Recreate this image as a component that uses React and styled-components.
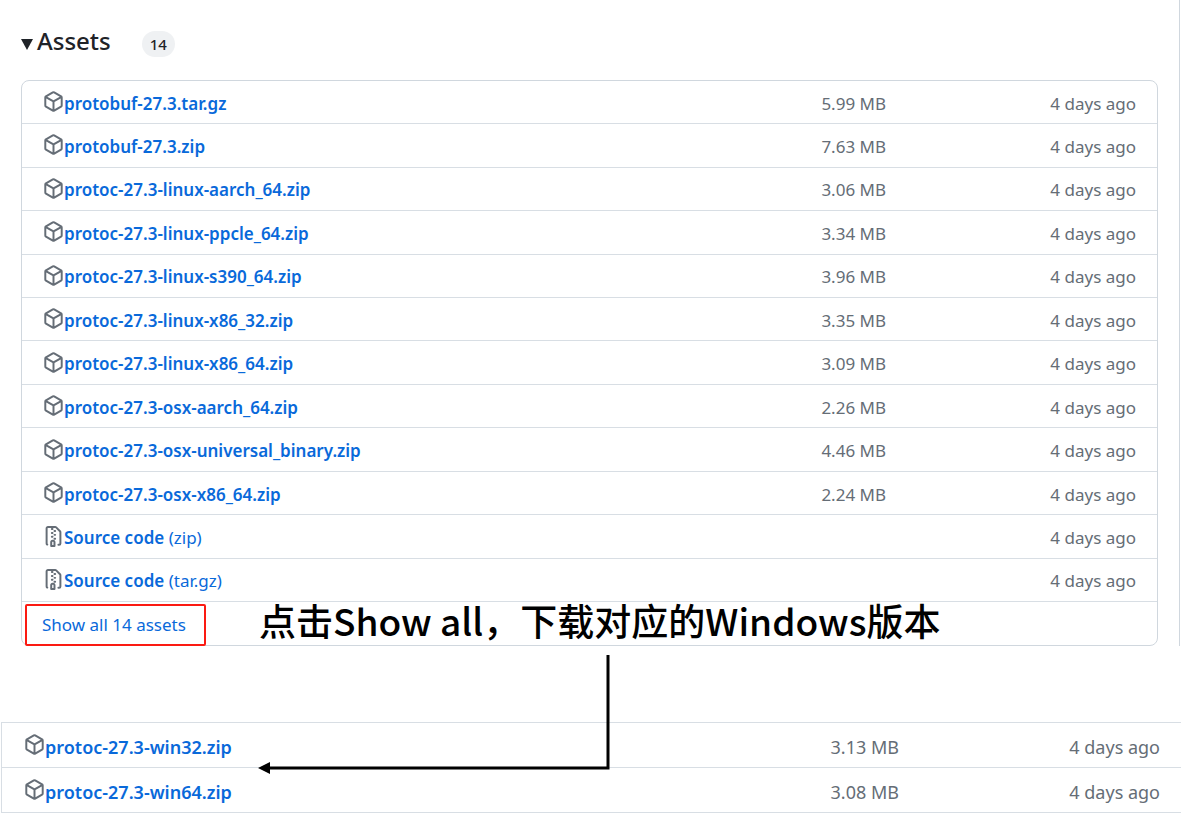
import React from 'react';
import styled, { createGlobalStyle } from 'styled-components';

const GlobalStyle = createGlobalStyle`
  *, *::before, *::after { box-sizing: border-box; }
  body {
    margin: 0;
    background: #fff;
    color: #1f2328;
    font-family: "Noto Sans", "Noto Sans CJK SC", sans-serif;
    font-size: 17px;
    line-height: 24px;
  }
`;

const Page = styled.main`
  position: relative;
  overflow: hidden;
`;

const Release = styled.section`
  margin-right: 1px;
  padding: 24px 21px 0;
  border-right: 1px solid #d0d7de;
`;

const Summary = styled.summary`
  display: flex;
  align-items: center;
  height: 36px;
  margin-bottom: 20px;
  list-style: none;
  cursor: pointer;
`;

const Caret = styled.svg`
  width: 12px;
  height: 11px;
  margin: 4px 4px 0 0;
  fill: #1f2328;
`;

const Title = styled.h3`
  margin: 0 0 2px;
  font-size: 24px;
  font-weight: 500;
  line-height: 34px;
`;

const Counter = styled.span`
  margin: 4px 0 0 31px;
  padding: 0 8px;
  border-radius: 13px;
  background: #eff1f3;
  font-size: 15px;
  font-weight: 500;
  line-height: 26px;
`;

const Box = styled.div`
  border: 1px solid #d0d7de;
  border-radius: 8px;
`;

const WindowsBox = styled.section`
  margin: 76px 0 0 1px;
  border: 1px solid #d8dee4;
  border-right: 0;
`;

const Table = styled.table`
  width: 100%;
  height: ${(p) => (p.$large ? '89px' : '520px')};
  border-collapse: collapse;
  table-layout: fixed;
  font-size: ${(p) => (p.$large ? '18px' : '17px')};
`;

const Row = styled.tr`
  & + & { border-top: 1px solid #d8dee4; }
`;

const NameCell = styled.td`
  padding: 3px 0 0 ${(p) => (p.$large ? '22px' : '21px')};
`;

const MetaCell = styled.td`
  width: ${(p) => (p.$date ? (p.$large ? '282px' : '271px') : '120px')};
  padding: 3px ${(p) => (p.$date ? '21px' : '0')} 0 0;
  color: #656d76;
  text-align: right;
`;

const AssetLink = styled.a`
  display: flex;
  align-items: center;
  color: #0969da;
  text-decoration: none;
  white-space: pre;
`;

const AssetName = styled.span`
  font-weight: 600;
`;

const Icon = styled.svg`
  flex: none;
  width: 21px;
  height: 21px;
  margin-bottom: 4px;
  fill: #656d76;
`;

const Footer = styled.div`
  display: flex;
  align-items: flex-start;
  height: 44px;
  border-top: 1px solid #d8dee4;
`;

const ShowAll = styled.button`
  width: 181px;
  height: 42px;
  margin: 2px 53px 0 3px;
  padding: 0 0 0 15px;
  border: 2px solid #fb1a12;
  border-radius: 2px;
  background: none;
  color: #0969da;
  font: inherit;
  text-align: left;
  cursor: pointer;
`;

const Note = styled.strong`
  color: #000;
  font-family: "Noto Sans CJK SC", sans-serif;
  font-size: 37px;
  font-weight: 500;
  line-height: 36px;
  white-space: nowrap;
`;

const Arrow = styled.svg`
  position: absolute;
  top: 654px;
  left: 258px;
  width: 352px;
  height: 121px;
  pointer-events: none;
`;

const icons = {
  box: 'm8.878.392 5.25 3.045c.54.314.872.89.872 1.514v6.098a1.75 1.75 0 0 1-.872 1.514l-5.25 3.045a1.75 1.75 0 0 1-1.756 0l-5.25-3.045A1.75 1.75 0 0 1 1 11.049V4.951c0-.624.332-1.201.872-1.514L7.122.392a1.75 1.75 0 0 1 1.756 0ZM7.875 1.69l-4.63 2.685L8 7.133l4.755-2.758-4.63-2.685a.248.248 0 0 0-.25 0ZM2.5 5.677v5.372c0 .09.047.171.125.216l4.625 2.683V8.432Zm6.25 8.271 4.625-2.683a.25.25 0 0 0 .125-.216V5.677L8.75 8.432Z',
  archive:
    'M3.5 1.75v11.5c0 .09.048.173.126.217a.75.75 0 0 1-.752 1.298A1.748 1.748 0 0 1 2 13.25V1.75C2 .784 2.784 0 3.75 0h5.586c.464 0 .909.185 1.237.513l2.914 2.914c.329.328.513.773.513 1.237v8.586A1.75 1.75 0 0 1 12.25 15h-.5a.75.75 0 0 1 0-1.5h.5a.25.25 0 0 0 .25-.25V4.664a.25.25 0 0 0-.073-.177L9.513 1.573a.25.25 0 0 0-.177-.073H7.25a.75.75 0 0 1 0 1.5h-.5a.75.75 0 0 1 0-1.5h-3a.25.25 0 0 0-.25.25Zm3.75 8.75h.5c.966 0 1.75.784 1.75 1.75v3a.75.75 0 0 1-.75.75h-2.5a.75.75 0 0 1-.75-.75v-3c0-.966.784-1.75 1.75-1.75ZM6 5.25a.75.75 0 0 1 .75-.75h.5a.75.75 0 0 1 0 1.5h-.5A.75.75 0 0 1 6 5.25Zm.75 2.25h.5a.75.75 0 0 1 0 1.5h-.5a.75.75 0 0 1 0-1.5ZM8 6.75A.75.75 0 0 1 8.75 6h.5a.75.75 0 0 1 0 1.5h-.5A.75.75 0 0 1 8 6.75ZM8.75 3h.5a.75.75 0 0 1 0 1.5h-.5a.75.75 0 0 1 0-1.5ZM8 9.75A.75.75 0 0 1 8.75 9h.5a.75.75 0 0 1 0 1.5h-.5A.75.75 0 0 1 8 9.75Zm-1 2.5v2.25h1v-2.25a.25.25 0 0 0-.25-.25h-.5a.25.25 0 0 0-.25.25Z',
};

const releaseAssets = [
  { name: 'protobuf-27.3.tar.gz', size: '5.99 MB' },
  { name: 'protobuf-27.3.zip', size: '7.63 MB' },
  { name: 'protoc-27.3-linux-aarch_64.zip', size: '3.06 MB' },
  { name: 'protoc-27.3-linux-ppcle_64.zip', size: '3.34 MB' },
  { name: 'protoc-27.3-linux-s390_64.zip', size: '3.96 MB' },
  { name: 'protoc-27.3-linux-x86_32.zip', size: '3.35 MB' },
  { name: 'protoc-27.3-linux-x86_64.zip', size: '3.09 MB' },
  { name: 'protoc-27.3-osx-aarch_64.zip', size: '2.26 MB' },
  { name: 'protoc-27.3-osx-universal_binary.zip', size: '4.46 MB' },
  { name: 'protoc-27.3-osx-x86_64.zip', size: '2.24 MB' },
  { name: 'Source code', kind: '(zip)' },
  { name: 'Source code', kind: '(tar.gz)' },
];

const windowsAssets = [
  { name: 'protoc-27.3-win32.zip', size: '3.13 MB' },
  { name: 'protoc-27.3-win64.zip', size: '3.08 MB' },
];

function AssetTable({ assets, large }) {
  return (
    <Table $large={large}>
      <tbody>
        {assets.map(({ name, kind, size }) => (
          <Row key={name + (kind || '')}>
            <NameCell $large={large}>
              <AssetLink href="#">
                <Icon viewBox="0 0 16 16" aria-hidden="true">
                  <path d={kind ? icons.archive : icons.box} />
                </Icon>
                <AssetName>{name}</AssetName>
                {kind && <span>{' ' + kind}</span>}
              </AssetLink>
            </NameCell>
            <MetaCell>{size}</MetaCell>
            <MetaCell $date $large={large}>4 days ago</MetaCell>
          </Row>
        ))}
      </tbody>
    </Table>
  );
}

export default function App() {
  return (
    <Page>
      <GlobalStyle />
      <Release>
        <details open>
          <Summary>
            <Caret viewBox="0 0 12 11" aria-hidden="true">
              <path d="M0 0h12L6 11z" />
            </Caret>
            <Title>Assets</Title>
            <Counter>14</Counter>
          </Summary>
          <Box>
            <AssetTable assets={releaseAssets} />
            <Footer>
              <ShowAll type="button">Show all 14 assets</ShowAll>
              <Note lang="zh-CN">点击Show all，下载对应的Windows版本</Note>
            </Footer>
          </Box>
        </details>
      </Release>
      <WindowsBox>
        <AssetTable assets={windowsAssets} large />
      </WindowsBox>
      <Arrow viewBox="0 0 352 121" aria-hidden="true">
        <path d="M350 1v113H10" fill="none" stroke="#000" strokeWidth="3" />
        <path d="M0 114l12-6v12z" />
      </Arrow>
    </Page>
  );
}
